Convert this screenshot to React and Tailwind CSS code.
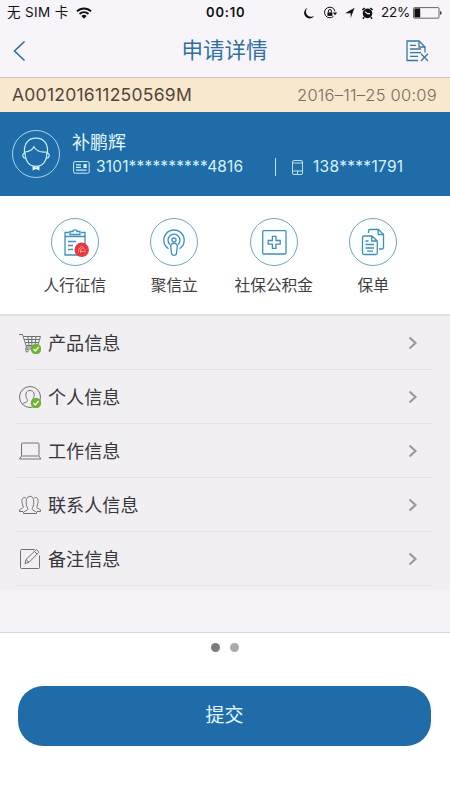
function WifiIcon() {
  return (
    <svg width="16" height="12" viewBox="0 0 16 12" fill="none" stroke="#111" strokeWidth="1.9">
      <path d="M1 4.4a10 10 0 0 1 14 0M3.5 7a6.4 6.4 0 0 1 9 0" />
      <path d="M5.4 9.1a3.7 3.7 0 0 1 5.2 0L8 11.8z" fill="#111" stroke="none" />
    </svg>
  );
}

function StatusIcons() {
  return (
    <svg width="74" height="14" viewBox="0 0 74 14" fill="none" stroke="#111">
      <path d="M4.8 1.6A5 5 0 0 0 11.600 9.600 5.600 5.600 0 1 1 4.800 1.600z" fill="#111" stroke="none" />
      <path d="M30.500 10.300a5.300 5.300 0 1 1 1.500-5" />
      <path d="M29.800 6.400h4.400l-2.200 2.800z" fill="#111" stroke="none" />
      <path d="M24.400 6.400h5v3.500h-5z" fill="#111" stroke="none" />
      <path d="M25.400 6.500V5a1.500 1.500 0 0 1 3 0v1.500" />
      <path d="M51.600 1.800 47.700 12V7.300h-5.600z" fill="#111" stroke="none" />
      <circle cx="64.500" cy="7.400" r="4.800" fill="#111" stroke="none" />
      <path d="m59.300 4 2.400-2M69.700 4l-2.400-2M61.200 11.200l-1.300 1.400M67.800 11.200l1.300 1.400" strokeWidth="1.6" />
      <path d="m62 5.600 2.500 2h2.500" stroke="#f7f5f9" strokeWidth="1.1" />
    </svg>
  );
}

function Battery() {
  return (
    <svg width="30" height="12" viewBox="0 0 30 12" fill="none">
      <rect x=".5" y=".6" width="25.5" height="10.6" rx="1" stroke="#555" strokeWidth=".9" />
      <rect x="1.4" y="1.4" width="5.8" height="9" fill="#111" />
      <path d="M27.2 4c1.8 0 1.8 3.8 0 3.8z" fill="#222" />
    </svg>
  );
}

function StatusBar() {
  return (
    <div className="flex items-center h-[25px] pl-[7px] text-[13.5px] text-[#111]">
      <p className="w-[69px] whitespace-nowrap tracking-[0.35px]">无 SIM 卡</p>
      <WifiIcon />
      <p className="ml-[114px] w-[97px] font-semibold text-[13px] tracking-[0.8px]">00:10</p>
      <StatusIcons />
      <p className="ml-[4px] w-[32px] text-[13.5px] tracking-[-0.2px]">22%</p>
      <Battery />
    </div>
  );
}

function NavBar() {
  return (
    <div className="flex items-center justify-between h-[53px] pl-[13px] pr-[20px] pb-px border-b border-[#cbc5c0]">
      <svg width="14" height="22" viewBox="0 0 14 22" fill="none" stroke="#25699f" strokeWidth="1.5">
        <path d="M11.5 1.5 1.5 11l10 9.5" />
      </svg>
      <h1 className="ml-[16px] text-[21.5px] text-[#2e70a5] leading-none">申请详情</h1>
      <svg width="24" height="22" viewBox="0 0 24 22" fill="none" stroke="#3976a5" strokeWidth="1.3">
        <path d="M12 20.5H1V1h12l6 6v5.5" />
        <path d="M13 1v6h6" />
        <path d="M4 5.3h6M4 9h11M4 12.7h11M4 16.4h8" />
        <path d="m15 13.8 7 7.2M22 13.8l-7 7.2" />
      </svg>
    </div>
  );
}

function Avatar() {
  return (
    <svg width="48" height="48" viewBox="0 0 48 48" fill="none" stroke="#c7f0fb">
      <circle cx="24" cy="24" r="23.5" strokeWidth=".8" />
      <g strokeWidth="1.2">
        <path d="M12.6 23.6C11.3 14 16 8.2 24 8.2s12.700 5.800 11.400 15.400" />
        <path d="M13.1 22c4.500-.5 7.500-2.200 8.800-5.200 2.600 4.500 7.200 6 13 5.200" />
        <path d="M13.1 22.500c0 9 4.500 13.800 10.900 13.800s10.900-4.800 10.900-13.800" />
        <path d="M13 23.200c-3.300-.2-2.700 5.300.8 5M35 23.200c3.300-.2 2.700 5.300-.8 5" />
      </g>
      <path d="m20.600 36 3.400 1.500 3.400-1.500v4.500L24 39l-3.400 1.500z" fill="#dff9ff" stroke="none" />
    </svg>
  );
}

function Profile() {
  return (
    <div className="flex items-center h-[84px] pl-[12px] bg-[#206ca9] text-[#d5f2fb]">
      <Avatar />
      <div className="ml-[12px] flex-1 pt-px">
        <p className="text-[18px] leading-[25px] text-[#e0f8ff]">补鹏辉</p>
        <div className="flex items-center h-[24px] text-[15.5px]">
          <svg className="ml-px" width="17" height="13" viewBox="0 0 17 13" fill="none" stroke="#c7effa">
            <rect x=".6" y=".6" width="15.6" height="11.6" rx="1.5" />
            <path d="M3 3.800h5M3 6.300h5M3 9.200h10.500" strokeWidth="1.2" />
            <path d="M10.500 3h3.200v4h-3.200z" fill="#d5f2fb" stroke="none" />
          </svg>
          <p className="ml-[6px] w-[179px] tracking-[0.16px] whitespace-nowrap">3101**********4816</p>
          <span className="w-px h-[18px] bg-[#bce9f7]" />
          <svg className="ml-[16px]" width="11" height="15" viewBox="0 0 11 15" fill="none" stroke="#b8e2f2">
            <rect x=".5" y=".5" width="10" height="14" rx="1.5" />
            <path d="M.5 3h10M.5 11h10M5.500 11v3.500" />
          </svg>
          <p className="ml-[10px] tracking-[0.3px] whitespace-nowrap">138****1791</p>
        </div>
      </div>
    </div>
  );
}

const services = [
  {
    label: '人行征信',
    icon: (
      <>
        <path d="M18 14.500h-4V37h20V14.500h-4" />
        <path d="M19 16.500v-3h3c0-2.300 4-2.300 4 0h3v3zM14 18.500h20M17 23.500h8M17 27.500h5M17 31.500h5" />
        <circle cx="30.700" cy="31.800" r="7.200" fill="#e83943" stroke="none" />
        <path d="M27.500 34.500v-3l3.200-3.500 3.200 3.500v3M29.500 35v-3.500l3-2M30 33.500h3" stroke="#f9a28c" strokeWidth=".9" />
      </>
    ),
  },
  {
    label: '聚信立',
    icon: (
      <>
        <path d="M18.500 30.800a10.200 10.200 0 1 1 11 0" />
        <path d="M19.800 26.500a6 6 0 1 1 8.400 0" />
        <circle cx="24" cy="22" r="2" />
        <path d="M20.700 28c0-3.500 6.600-3.500 6.600 0l-.8 7.500c-.5 2.500-4.500 2.500-5 0z" fill="#fff" />
      </>
    ),
  },
  {
    label: '社保公积金',
    icon: (
      <>
        <rect x="12.700" y="12.700" width="23.300" height="23.300" rx="1" />
        <path d="M22.400 18.300h3.600v4.200h4.200v3.600H26v4.200h-3.600v-4.200h-4.200v-3.600h4.200z" />
      </>
    ),
  },
  {
    label: '保单',
    icon: (
      <>
        <path d="M19.500 15v-2q0-1.500 1.500-1.500h8.500l5 5v13q0 1.500-1.500 1.500h-3" />
        <path d="M29.200 11.500v5h5.300M22.800 18v5h5.300M13.500 19.500q0-1.500 1.500-1.500h8l5.300 5v12q0 1.500-1.500 1.500H15q-1.500 0-1.500-1.500zM16.500 23h3M16.500 26.500h8.500M16.500 30h8.500M18 33.200h6" />
      </>
    ),
  },
];

function Services() {
  return (
    <div className="flex h-[120px] pt-[22px] pl-[25px] bg-[#fefefe] border-b-2 border-[#e2e0e3]">
      {services.map((service) => (
        <div key={service.label} className="flex flex-col items-center w-[99.5px]">
          <svg width="48" height="48" viewBox="0 0 48 48" fill="none" stroke="#418eb9" strokeWidth="1.3">
            <circle cx="24" cy="24" r="23.5" fill="#fcffff" stroke="#6699b4" strokeWidth=".9" />
            {service.icon}
          </svg>
          <p className="mt-[8px] text-[15.7px] leading-[24px] text-[#3e3e42] whitespace-nowrap">
            {service.label}
          </p>
        </div>
      ))}
    </div>
  );
}

const checkBadge = (
  <>
    <circle cx="17" cy="17" r="5.3" fill="#6eb336" stroke="none" />
    <path d="m14.500 17 1.800 2 3.300-4" stroke="#f6fff0" strokeWidth="1.3" />
  </>
);

const sections = [
  {
    label: '产品信息',
    icon: (
      <>
        <path d="M0 2.500h3.500L7.500 15h9M4.500 4.500h17l-2.700 9H7.200M5.500 7.500h15.200M6.300 10.500h13.400M8.800 4.500l1.200 9M12.800 4.500v9M17 4.500l-1 9" />
        <path d="m7.500 15-1 2h7" />
        <circle cx="8" cy="18.700" r="1.300" />
        {checkBadge}
      </>
    ),
  },
  {
    label: '个人信息',
    icon: (
      <>
        <circle cx="11" cy="11" r="10.5" />
        <path d="M3.500 18c1.500-1.500 4-1.500 4.700-2.700.5-1.200 0-2-.8-3.500C6 8.500 7 4.500 11 4.500s5 4 3.600 7.300c-.8 1.500-1.300 2.300-.8 3.500.7 1.200 3.200 1.200 4.700 2.700" />
        {checkBadge}
      </>
    ),
  },
  {
    label: '工作信息',
    icon: (
      <>
        <rect x="2.500" y="3" width="17.500" height="13" rx="1" />
        <path d="m2.500 16-2 3h21.300L20 16" />
      </>
    ),
  },
  {
    label: '联系人信息',
    icon: (
      <>
        <path d="M4.500 19.500v-1.300c1.500-1.500 4-1.500 4.300-2.700.3-1.500-1-2.500-1.500-5C6.800 5 8.300 2.300 11 2.300s4.200 2.700 3.700 8.200c-.5 2.500-1.800 3.500-1.500 5 .3 1.200 2.800 1.200 4.300 2.700v1.300z" />
        <path d="M7.200 4.200C5 2.500 2.600 4 2.900 7.500c.1 3 1.600 4.500 1.200 6-.4 1-3 1.300-3.600 2.500v1.500h3.500M14.800 4.200c2.200-1.700 4.600-.2 4.300 3.300-.1 3-1.600 4.500-1.200 6 .4 1 3 1.300 3.600 2.500v1.500H18" />
      </>
    ),
  },
  {
    label: '备注信息',
    icon: (
      <>
        <path d="M15.500 1.500h-13q-1 0-1 1v17q0 1 1 1h17q1 0 1-1V7.500" />
        <path d="m7 11.500-1 4 4-1.200L20 4.200 17.300 1.500zM7 11.500l3 2.800M15.500 3.500l2.600 2.600" />
      </>
    ),
  },
];

function SectionList() {
  return (
    <div className="h-[274px] pl-[16px] pr-[17px] bg-[#f1eff2]">
      {sections.map((section) => (
        <div key={section.label} className="flex items-center h-[54px] pl-[3px] pr-[15px] border-b border-[#e4e2e5]">
          <svg width="22" height="22" viewBox="0 0 22 22" fill="none" stroke="#717174" strokeWidth="1">
            {section.icon}
          </svg>
          <p className="ml-[7px] pt-px flex-1 text-[18.1px] leading-[26px] text-[#37373b]">{section.label}</p>
          <svg width="10" height="14" viewBox="0 0 10 14" fill="none" stroke="#9b999d" strokeWidth="2.2">
            <path d="m1.500 1.500 6 5.500-6 5.500" />
          </svg>
        </div>
      ))}
    </div>
  );
}

export default function App() {
  return (
    <div className="flex flex-col w-[450px] h-[800px] overflow-hidden bg-white font-['Inter','Noto_Sans_CJK_SC',sans-serif]">
      <div className="bg-[#f7f5f9]">
        <StatusBar />
        <NavBar />
      </div>
      <div className="flex items-center justify-between h-[34px] pl-[12px] pr-[13px] bg-[#f8e8cd]">
        <p className="text-[17.5px] tracking-[0.25px] text-[#51463c]">A001201611250569M</p>
        <p className="text-[16.5px] tracking-[0.25px] font-light text-[#776d62]">2016–11–25 00:09</p>
      </div>
      <Profile />
      <Services />
      <SectionList />
      <div className="h-[43px] bg-[#f4f2f6] border-b border-[#d9d7da]" />
      <div className="flex justify-center gap-[10px] pt-[10px]">
        <span className="w-[9px] h-[9px] rounded-full bg-[#7c7c7e]" />
        <span className="w-[9px] h-[9px] rounded-full bg-[#aaaaac]" />
      </div>
      <button
        type="button"
        className="mt-[34px] ml-[18px] w-[413px] h-[60px] rounded-[25px] bg-[#206ca9] text-[19px] text-[#e0f7ff]"
      >
        提交
      </button>
    </div>
  );
}
